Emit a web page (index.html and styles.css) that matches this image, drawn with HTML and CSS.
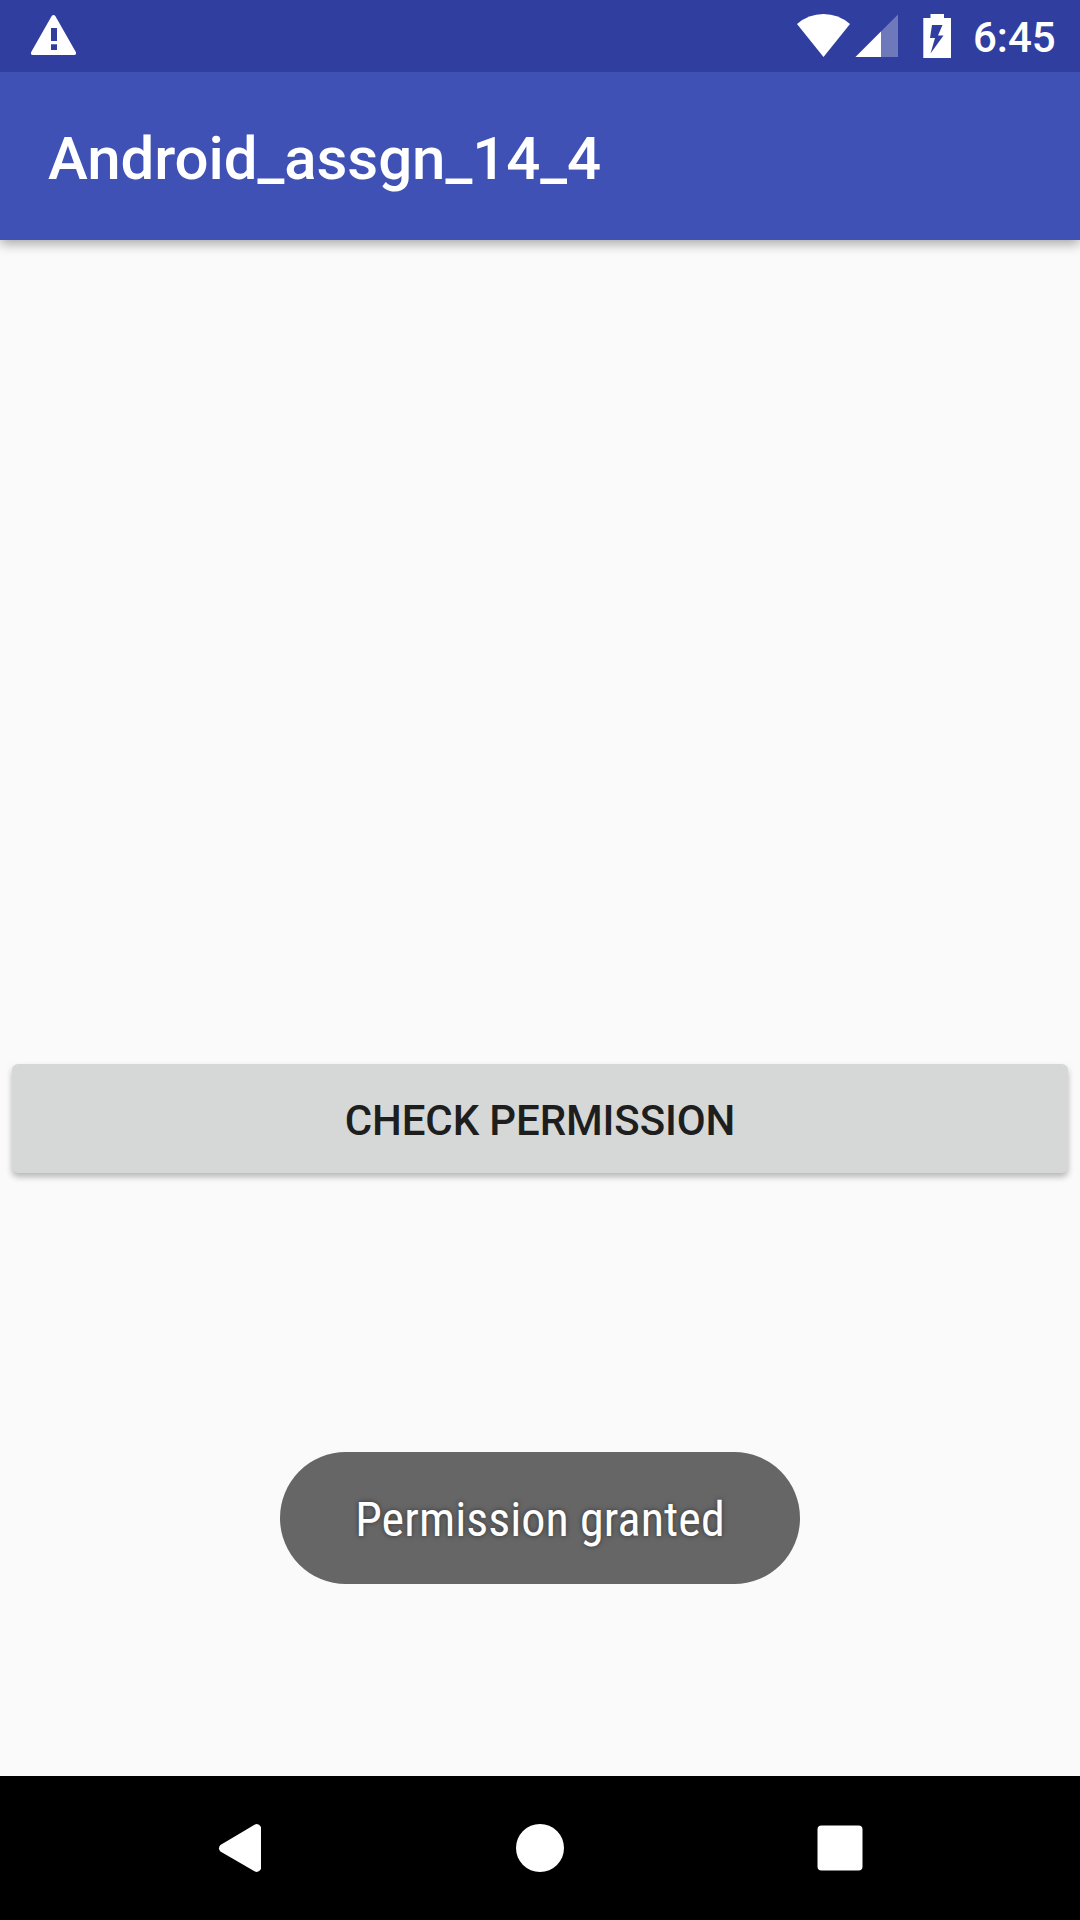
FILE: index.html
```html
<!DOCTYPE html>
<html lang="en">
<head>
<meta charset="utf-8">
<title>Android_assgn_14_4</title>
<link rel="stylesheet" href="styles.css">
</head>
<body>
<div class="screen">
  <header class="status-bar">
    <svg class="icon-warning" width="45" height="40" viewBox="0 0 45 40" aria-label="Warning">
      <path fill="#fff" fill-rule="evenodd" d="M20.700 1.100Q22.500-1.100 24.300 1.100L44.800 37Q45.800 40 43 40H2Q-.8 40 .2 37ZM20 13V26H26V13ZM20 29.300V35H26V29.300Z"/>
    </svg>
    <div class="status-icons">
      <svg class="icon-wifi" width="53" height="43" viewBox="0 0 53 43">
        <path fill="#fff" d="M26.500 43L0 10Q11.500 0 26.500 0T53 10Z"/>
      </svg>
      <svg class="icon-signal" width="43" height="43" viewBox="0 0 43 43">
        <path fill="#fff" fill-opacity=".3" d="M.5 43L43 .5V43Z"/>
        <path fill="#fff" d="M.5 43L26 17.500V43Z"/>
      </svg>
      <svg class="icon-battery" width="28" height="44" viewBox="0 0 28 44">
        <path fill="#fff" fill-rule="evenodd" d="M7.500 0H21V4H28V44H.3V4H7.500ZM9 11L7 24H12L7.500 39.500L20.500 21.500H15L19.500 11Z"/>
      </svg>
    </div>
    <span class="clock">6:45</span>
  </header>
  <div class="app-bar"><h1 class="title">Android_assgn_14_4</h1></div>
  <main class="content">
    <button class="button" type="button">CHECK PERMISSION</button>
    <div class="toast"><span class="toast-text">Permission granted</span></div>
  </main>
  <nav class="nav-bar">
    <svg width="48" height="48" viewBox="0 0 48 48" aria-label="Back">
      <path fill="#fff" d="M4.400 21L38.500 .7Q42.500-1.200 45 3V45Q42.500 49.200 38.500 47.300L4.400 27.500Q3 26 3 24.200T4.400 21Z"/>
    </svg>
    <svg width="48" height="48" viewBox="0 0 48 48" aria-label="Home"><circle cx="24" cy="24" r="24" fill="#fff"/></svg>
    <svg width="48" height="48" viewBox="0 0 48 48" aria-label="Recent apps"><rect x="1.500" y="1.500" width="45" height="45" rx="4" fill="#fff"/></svg>
  </nav>
</div>
</body>
</html>
```
FILE: styles.css
```css
* { box-sizing: border-box; }
body {
  margin: 0;
  font-family: Roboto, sans-serif;
}
.screen {
  display: flex;
  flex-direction: column;
  width: 1080px;
  height: 1920px;
  overflow: hidden;
  background: #fafafa;
}
.status-bar {
  position: relative;
  z-index: 1;
  display: flex;
  align-items: flex-start;
  height: 72px;
  padding: 14px 24px 0 31px;
  background: #303f9f;
  color: #fff;
}
.status-bar svg, .nav-bar svg { display: block; }
.icon-warning { margin-top: 1px; }
.status-icons {
  display: flex;
  margin-left: auto;
}
.icon-signal { margin-left: 5px; }
.icon-battery { margin-left: 25px; }
.clock {
  width: 83px;
  margin-left: 22px;
  font-size: 42px;
  font-weight: 500;
  line-height: 48px;
  white-space: nowrap;
}
.app-bar {
  display: flex;
  align-items: center;
  height: 168px;
  padding: 5px 48px 0;
  background: #3f51b5;
  box-shadow: 0 4px 11px rgba(0, 0, 0, .33);
}
.title {
  margin: 0;
  color: #fff;
  font-size: 60px;
  font-weight: 500;
  line-height: 70px;
  letter-spacing: -.08px;
}
.content {
  display: flex;
  flex: 1;
  flex-direction: column;
  align-items: center;
  padding: 824px 12px 0;
}
.button {
  width: 100%;
  height: 109px;
  padding: 5px 0 0;
  border: 0;
  border-radius: 6px;
  background: #d6d8d7;
  box-shadow: 0 4px 6px rgba(0, 0, 0, .27);
  color: #1e1e1e;
  font: 500 42px/50px Roboto, sans-serif;
  letter-spacing: -.12px;
}
.toast {
  display: flex;
  justify-content: center;
  width: 520px;
  height: 132px;
  margin-top: 279px;
  padding-top: 40px;
  border-radius: 66px;
  background: #666;
}
.toast-text {
  color: #fff;
  font-family: "Roboto Condensed", Roboto, sans-serif;
  font-size: 48px;
  font-stretch: 75%;
  line-height: 56px;
  letter-spacing: .1px;
  white-space: nowrap;
  text-shadow: 0 0 5px rgba(0, 0, 0, .5);
}
.nav-bar {
  display: flex;
  justify-content: center;
  align-items: center;
  gap: 252px;
  height: 144px;
  background: #000;
}
```
